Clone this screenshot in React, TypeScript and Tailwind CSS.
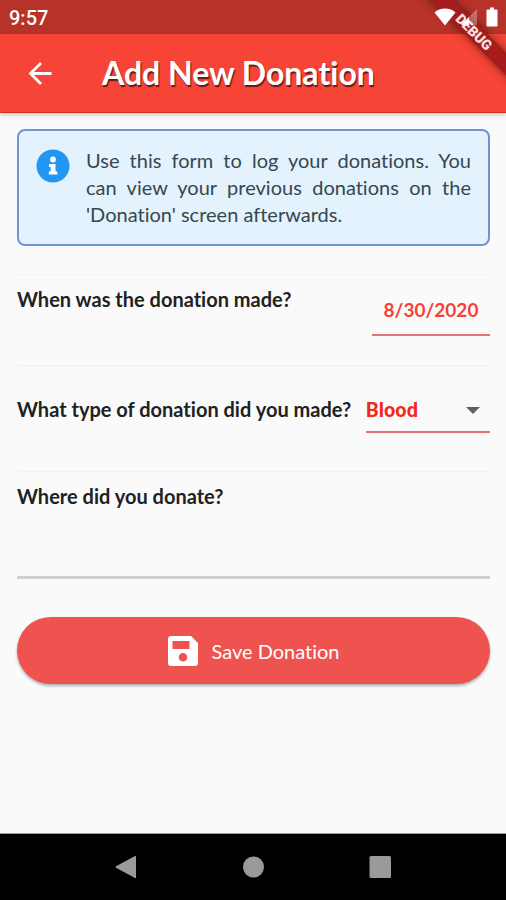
import { useState } from 'react';

const donationTypes = ['Blood', 'Plasma', 'Platelets'];

function StatusBar() {
  return (
    <div className="flex h-[34px] items-center justify-between bg-[#b73228] pr-2 pl-[9px] text-white">
      <span className="pt-[2px] font-['Roboto',sans-serif] text-xl font-medium">9:57</span>
      <div className="relative z-10 flex items-center">
        <svg className="h-[18px] w-[22px]" viewBox="0 0 22 18" fill="currentColor">
          <path d="M0.5 4.5C3 1.8 7 0.5 11 0.5s8 1.3 10.500 4L11 17.500z" />
        </svg>
        <svg className="ml-1 h-[18px] w-[18px]" viewBox="0 0 18 18" fill="currentColor">
          <path d="M17 1v16H1z" opacity="0.3" />
          <path d="M9 9v8H1z" />
        </svg>
        <svg className="ml-2 h-5 w-3" viewBox="0 0 12 20" fill="currentColor">
          <path d="M4 0.500h4v2h2.500q1 0 1 1v15q0 1-1 1h-9q-1 0-1-1v-15q0-1 1-1H4z" />
        </svg>
      </div>
    </div>
  );
}

function DebugBanner() {
  return (
    <div className="pointer-events-none absolute top-0 right-0 h-24 w-24 overflow-hidden">
      <div className="absolute top-6 -right-12 flex h-4 w-40 rotate-45 items-center justify-center bg-[#a51c1c] font-['Roboto',sans-serif] text-sm leading-none font-black text-[#fbe4e2] shadow-[0_0_8px_rgba(0,0,0,0.5)]">
        DEBUG
      </div>
    </div>
  );
}

function AppBar() {
  return (
    <header className="flex h-[79px] items-center border-b border-[#d2301f] bg-[#f64436] pl-6 text-white shadow-[0_2px_4px_rgba(0,0,0,0.2)]">
      <button type="button" aria-label="Back" className="p-1">
        <svg className="h-6 w-6" viewBox="0 0 24 24" fill="none" stroke="currentColor" strokeWidth="2.800">
          <path d="M23.500 12.500H2.500M13 2L2.500 12.500L13 23" />
        </svg>
      </button>
      <h1 className="ml-[46px] text-[32px] leading-10 font-bold [text-shadow:1px_2px_1px_rgba(0,0,0,0.6)]">
        Add New Donation
      </h1>
    </header>
  );
}

function InfoBox() {
  return (
    <div className="flex gap-4 rounded-lg border-2 border-[#6f93d6] bg-[#e3f2fd] px-[17px] py-4">
      <svg className="mt-[2px] h-[34px] w-[34px] shrink-0" viewBox="0 0 34 34">
        <circle cx="17" cy="17" r="16.500" fill="#2196f3" />
        <circle cx="17" cy="10.500" r="2.900" fill="#fff" />
        <path d="M13 15h6.500v7.500h1.800v3h-8.500v-3h1.900V18H13z" fill="#fff" />
      </svg>
      <p className="text-justify text-xl leading-[27px] text-[#37474f]">
        Use this form to log your donations. You can view your previous donations on the 'Donation' screen afterwards.
      </p>
    </div>
  );
}

function NavBar() {
  return (
    <nav className="flex h-[67px] items-center justify-center gap-[103px] border-t border-[#9a9a9a] bg-black text-[#9a9a9a]">
      <button type="button" aria-label="Back">
        <svg className="h-6 w-6" viewBox="0 0 24 24" fill="currentColor">
          <path d="M22 1.500v21q0 1-1 0.500L2 12.700q-1-0.700 0-1.400L21 1q1-0.500 1 0.500z" />
        </svg>
      </button>
      <button type="button" aria-label="Home">
        <svg className="h-6 w-6" viewBox="0 0 24 24" fill="currentColor">
          <circle cx="12.500" cy="12" r="10.500" />
        </svg>
      </button>
      <button type="button" aria-label="Overview">
        <svg className="h-6 w-6" viewBox="0 0 24 24" fill="currentColor">
          <rect x="1.500" y="1" width="21.500" height="22" rx="1.500" />
        </svg>
      </button>
    </nav>
  );
}

export default function App() {
  const [date, setDate] = useState('8/30/2020');
  const [type, setType] = useState('Blood');
  const [place, setPlace] = useState('');

  return (
    <div className="relative flex min-h-screen flex-col bg-[#fafafa] font-['Lato',sans-serif] [font-variant-ligatures:none]">
      <StatusBar />
      <AppBar />
      <DebugBanner />

      <main className="flex-1 pt-4 pr-4 pl-[17px]">
        <InfoBox />

        <form className="mt-7" onSubmit={(e) => e.preventDefault()}>
          <div className="flex h-[91px] items-start justify-between border-t border-[#f3f3f3] pt-[10px]">
            <label htmlFor="date" className="text-xl leading-7 font-bold text-[#212121]">
              When was the donation made?
            </label>
            <input
              id="date"
              type="text"
              value={date}
              onChange={(e) => setDate(e.target.value)}
              className="h-[51px] w-[118px] border-b-2 border-[#e57373] bg-transparent text-center text-[19px] font-bold text-[#f44336] outline-none"
            />
          </div>

          <div className="flex h-[106px] items-start justify-between border-t border-[#f0f0f0] pt-[29px]">
            <label htmlFor="type" className="text-xl leading-7 font-bold whitespace-nowrap text-[#212121]">
              What type of donation did you made?
            </label>
            <div className="relative w-[124px]">
              <select
                id="type"
                value={type}
                onChange={(e) => setType(e.target.value)}
                className="h-[38px] w-full appearance-none border-b-2 border-[#e57373] bg-transparent pb-[6px] font-['Roboto',sans-serif] text-xl leading-7 font-bold text-[#f02a1d] outline-none"
              >
                {donationTypes.map((t) => (
                  <option key={t}>{t}</option>
                ))}
              </select>
              <svg className="pointer-events-none absolute top-3 right-[10px] h-[7px] w-[14px]" viewBox="0 0 14 7">
                <path d="M0 0h14L7 7z" fill="#616161" />
              </svg>
            </div>
          </div>

          <div className="h-[134px] border-t border-[#f3f3f3] pt-[10px]">
            <label htmlFor="place" className="block text-xl leading-7 font-bold text-[#212121]">
              Where did you donate?
            </label>
            <input
              id="place"
              type="text"
              value={place}
              onChange={(e) => setPlace(e.target.value)}
              className="mt-4 h-[53px] w-full border-b-[3px] border-[#cfcfcf] bg-transparent text-xl outline-none"
            />
          </div>

          <div className="border-t border-[#f5f5f5] pt-[11px]">
            <button
              type="submit"
              className="flex h-[67px] w-full items-center justify-center gap-3 rounded-full bg-[#ef5350] text-xl text-white shadow-[0_2px_3px_rgba(0,0,0,0.3)]"
            >
              <svg className="h-8 w-8" viewBox="0 0 32 32">
                <path
                  d="M4 1h20l7 7v20a3 3 0 0 1-3 3H4a3 3 0 0 1-3-3V4a3 3 0 0 1 3-3zM5.500 6v8h17V6zM16 18a4.300 4.300 0 1 0 0 8.600a4.300 4.300 0 1 0 0-8.600z"
                  fill="#fff"
                  fillRule="evenodd"
                />
              </svg>
              Save Donation
            </button>
          </div>
        </form>
      </main>

      <NavBar />
    </div>
  );
}
